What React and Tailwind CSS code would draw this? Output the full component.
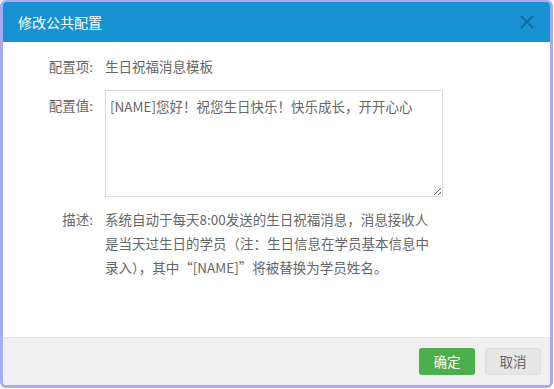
export default function App() {
  const font = { fontFamily: '"Noto Sans CJK SC", "Noto Sans", sans-serif' };
  return (
    <div className="w-[554px] h-[389px] bg-white" style={font}>
      <div className="w-[553px] h-[388px] border-[3px] border-t-2 border-[#aaaaf2] rounded-[6px] overflow-hidden flex flex-col">
        <div className="h-[40px] bg-[#1892d2] flex items-center justify-between pl-[15px] pr-[16px] shrink-0">
          <span className="text-white text-[14px]">修改公共配置</span>
          <svg width="14" height="14" viewBox="0 0 14 14" className="opacity-90">
            <path d="M1.5 1.5 L12.5 12.5 M12.5 1.5 L1.5 12.5" stroke="#15679a" strokeWidth="1.8" strokeLinecap="round" />
          </svg>
        </div>
        <div className="flex-1 bg-white pt-[12px] text-[13.5px] text-[#666]">
          <div className="flex items-center h-[24px]">
            <div className="w-[90px] text-right leading-[24px]">配置项:</div>
            <div className="pl-[12px] leading-[24px]">生日祝福消息模板</div>
          </div>
          <div className="flex mt-[12px]">
            <div className="w-[90px] text-right pt-[3px] leading-[24px]">配置值:</div>
            <div className="pl-[12px]">
              <textarea
                className="w-[338px] h-[107px] border border-[#dcdcdc] px-[4px] py-[3px] leading-[24px] text-[#666] outline-none resize-y"
                defaultValue="[NAME]您好！祝您生日快乐！快乐成长，开开心心"
              />
            </div>
          </div>
          <div className="flex mt-[6px]">
            <div className="w-[90px] text-right leading-[24px]">描述:</div>
            <div className="pl-[12px] leading-[24px] whitespace-nowrap">
              系统自动于每天8:00发送的生日祝福消息，消息接收人<br />
              是当天过生日的学员（注：生日信息在学员基本信息中<br />
              录入），其中“[NAME]”将被替换为学员姓名。
            </div>
          </div>
        </div>
        <div className="h-[48px] bg-[#f0f0f0] border-t border-[#e6e6e6] flex items-center justify-end pr-[9px] gap-[10px] shrink-0">
          <button className="w-[56px] h-[27px] rounded-[3px] bg-[#4cae4c] text-white text-[13.5px]">确定</button>
          <button className="w-[56px] h-[27px] rounded-[3px] bg-[#e6e6e6] border border-[#dddddd] text-[#666] text-[13.5px]">取消</button>
        </div>
      </div>
    </div>
  );
}
